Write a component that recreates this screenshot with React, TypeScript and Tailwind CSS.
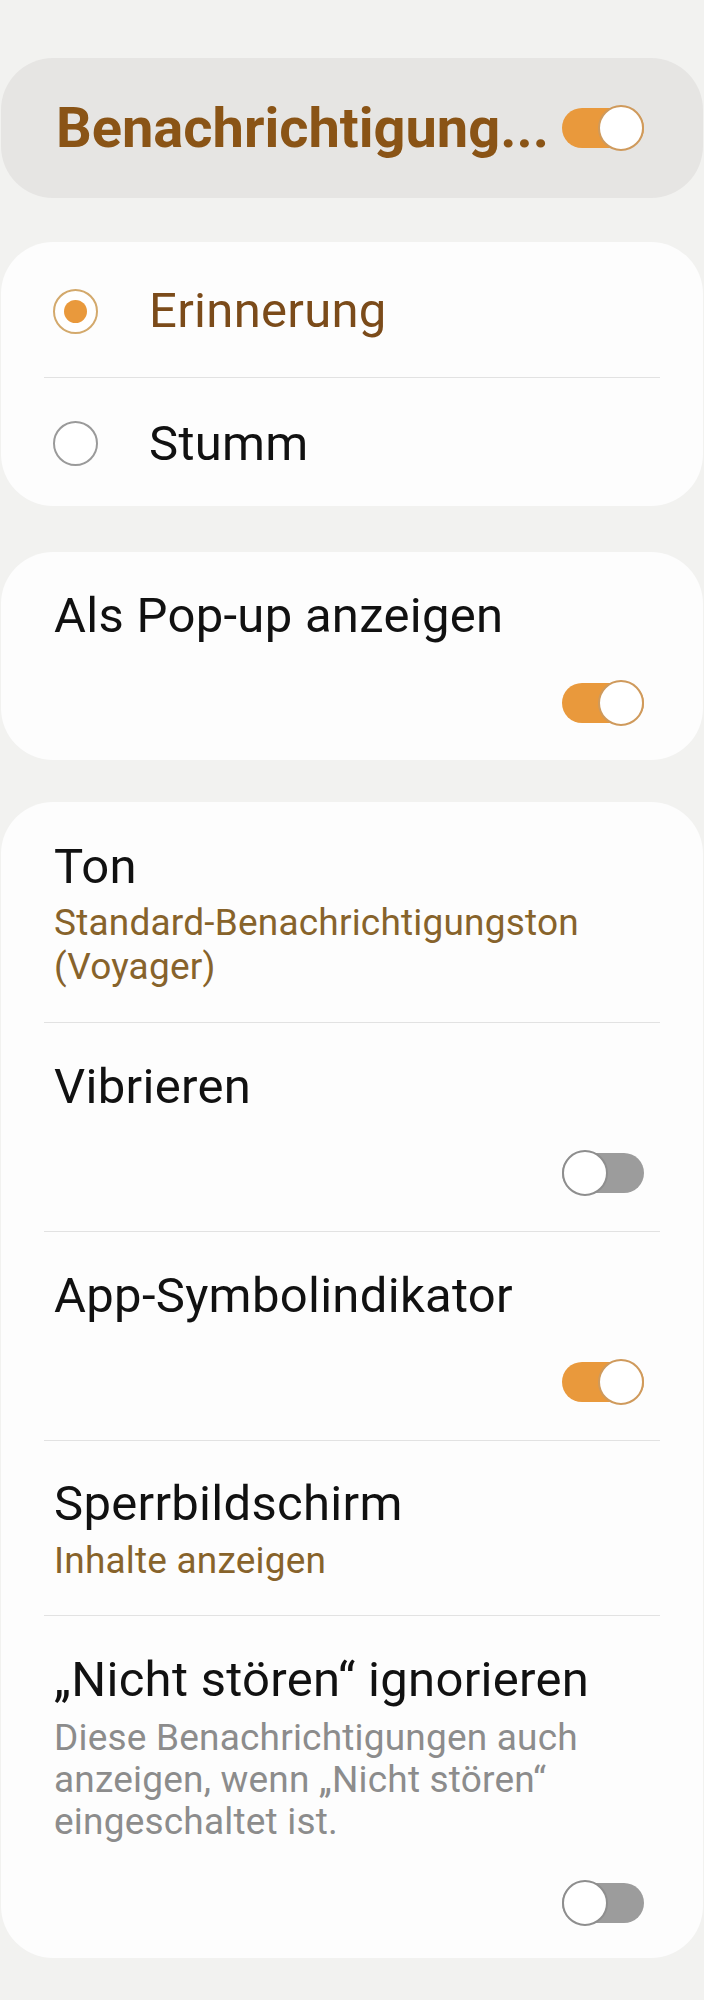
import React from "react";

function Toggle({ on }: { on: boolean }) {
  return (
    <div className="relative h-[46px] w-[82px] shrink-0">
      <div
        className={
          on
            ? "absolute left-0 right-0 top-[3px] h-[40px] rounded-full bg-[#e9993c]"
            : "absolute left-0 right-0 top-[3px] h-[40px] rounded-full bg-[#9c9c9c]"
        }
      />
      <div
        className={
          on
            ? "absolute right-0 top-0 h-[46px] w-[46px] rounded-full border-[2.5px] border-[#cf9a5c] bg-white"
            : "absolute left-0 top-0 h-[46px] w-[46px] rounded-full border-[2.5px] border-[#8e8e8e] bg-white"
        }
      />
    </div>
  );
}

function Radio({ checked }: { checked: boolean }) {
  return checked ? (
    <div className="flex h-[45px] w-[45px] shrink-0 items-center justify-center rounded-full border-[2.5px] border-[#d3a96c] bg-white">
      <div className="h-[23px] w-[23px] rounded-full bg-[#e9993c]" />
    </div>
  ) : (
    <div className="h-[45px] w-[45px] shrink-0 rounded-full border-[2.5px] border-[#9a9a9a] bg-white" />
  );
}

const Divider = () => <div className="h-px bg-[#e2e2e2]" />;

export default function App() {
  return (
    <div className="min-h-[2000px] bg-[#f2f2f0] pt-[58px] font-['Roboto',_sans-serif] text-[#111]">
      {/* master switch */}
      <div className="mx-px flex h-[140px] items-center justify-between rounded-[52px] bg-[#e6e5e3] pl-[55px] pr-[59px]">
        <span className="text-[56px] font-bold leading-none text-[#8a5416]">
          Benachrichtigung...
        </span>
        <Toggle on />
      </div>

      {/* alert type */}
      <div className="mx-px mt-[44px] rounded-[52px] bg-[#fdfdfd] px-[43px]">
        <div className="flex h-[135px] items-center gap-[51px] pl-[9px] pt-[3px]">
          <Radio checked />
          <span className="text-[49px] leading-[58px] tracking-[0.3px] text-[#7b4b1a]">Erinnerung</span>
        </div>
        <Divider />
        <div className="flex h-[128px] items-center gap-[51px] pl-[9px] pt-[3px]">
          <Radio checked={false} />
          <span className="text-[49px] leading-[58px] tracking-[0.3px]">Stumm</span>
        </div>
      </div>

      {/* popup */}
      <div className="mx-px mt-[46px] rounded-[52px] bg-[#fdfdfd] px-[43px] pb-[34px] pt-[35px]">
        <div className="pl-[10px] text-[49px] leading-[58px] tracking-[0.3px]">Als Pop-up anzeigen</div>
        <div className="mt-[35px] flex justify-end pr-[16px]">
          <Toggle on />
        </div>
      </div>

      {/* details */}
      <div className="mx-px mt-[42px] rounded-[52px] bg-[#fdfdfd] px-[43px] text-[49px] leading-[58px] tracking-[0.3px]">
        <div className="pb-[33px] pl-[10px] pt-[36px]">
          <div>Ton</div>
          <div className="mt-[5px] text-[37px] leading-[44px] tracking-[0.2px] text-[#87632b]">
            Standard-Benachrichtigungston
            <br />
            (Voyager)
          </div>
        </div>
        <Divider />
        <div className="pb-[35px] pt-[35px]">
          <div className="pl-[10px]">Vibrieren</div>
          <div className="mt-[34px] flex justify-end pr-[16px]">
            <Toggle on={false} />
          </div>
        </div>
        <Divider />
        <div className="pb-[35px] pt-[35px]">
          <div className="pl-[10px]">App-Symbolindikator</div>
          <div className="mt-[34px] flex justify-end pr-[16px]">
            <Toggle on />
          </div>
        </div>
        <Divider />
        <div className="pb-[32px] pl-[10px] pt-[34px]">
          <div>Sperrbildschirm</div>
          <div className="mt-[6px] text-[37px] leading-[44px] tracking-[0.2px] text-[#87632b]">Inhalte anzeigen</div>
        </div>
        <Divider />
        <div className="pb-[32px] pt-[35px]">
          <div className="pl-[10px]">„Nicht stören“ ignorieren</div>
          <div className="mt-[8px] pl-[10px] text-[37px] leading-[42px] tracking-[0.2px] text-[#8c8c8c]">
            Diese Benachrichtigungen auch
            <br />
            anzeigen, wenn „Nicht stören“
            <br />
            eingeschaltet ist.
          </div>
          <div className="mt-[37px] flex justify-end pr-[16px]">
            <Toggle on={false} />
          </div>
        </div>
      </div>
    </div>
  );
}
